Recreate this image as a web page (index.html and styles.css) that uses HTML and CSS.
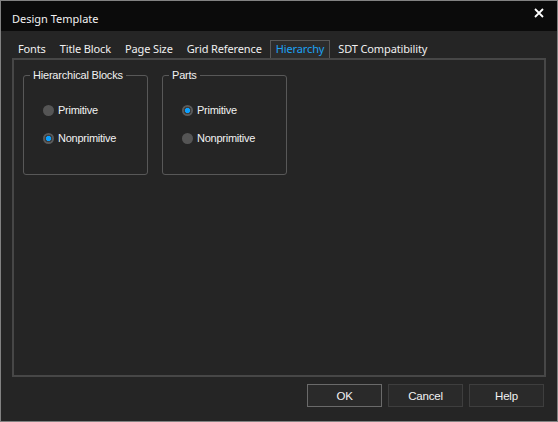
FILE: index.html
```html
<!DOCTYPE html>
<html>
<head>
<meta charset="utf-8">
<link rel="stylesheet" href="styles.css">
</head>
<body>
<div class="window">
  <div class="titlebar">
    <span class="title">Design Template</span>
    <svg class="close" width="10" height="10" viewBox="0 0 10 10"><path d="M1 1 L9 9 M9 1 L1 9" stroke="#ffffff" stroke-width="1.8" fill="none"/></svg>
  </div>
  <div class="content">
    <div class="tabs">
      <div class="tab">Fonts</div>
      <div class="tab">Title Block</div>
      <div class="tab">Page Size</div>
      <div class="tab">Grid Reference</div>
      <div class="tab active">Hierarchy</div>
      <div class="tab">SDT Compatibility</div>
    </div>
    <div class="panel">
      <fieldset class="group">
        <legend>Hierarchical Blocks</legend>
        <div class="opts">
          <div class="opt"><span class="radio"></span><span>Primitive</span></div>
          <div class="opt"><span class="radio checked"></span><span>Nonprimitive</span></div>
        </div>
      </fieldset>
      <fieldset class="group">
        <legend>Parts</legend>
        <div class="opts">
          <div class="opt"><span class="radio checked"></span><span>Primitive</span></div>
          <div class="opt"><span class="radio"></span><span>Nonprimitive</span></div>
        </div>
      </fieldset>
    </div>
    <div class="buttons">
      <div class="btn default">OK</div>
      <div class="btn">Cancel</div>
      <div class="btn">Help</div>
    </div>
  </div>
</div>
</body>
</html>
```
FILE: styles.css
```css
html, body {
  margin: 0;
  padding: 0;
  background: #252525;
}
.window {
  width: 558px;
  height: 422px;
  box-sizing: border-box;
  border: 1px solid #828282;
  background: #252525;
  color: #f2f2f2;
  font-family: "Liberation Sans", Arial, sans-serif;
  font-size: 11px;
}
.titlebar {
  height: 30px;
  background: #0b0b0b;
  display: flex;
  align-items: center;
  justify-content: space-between;
  padding: 0 13px 0 11px;
  box-sizing: border-box;
}
.title {
  font-family: "Noto Sans", "Open Sans", sans-serif;
  font-size: 11px;
  color: #f2f2f2;
  padding-top: 5px;
}
.close {
  margin-top: -7px;
}
.content {
  padding: 0 11px;
}
.tabs {
  display: flex;
  margin-top: 9px;
  height: 18px;
}
.tab {
  font-family: "Noto Sans", "Open Sans", sans-serif;
  font-size: 11px;
  letter-spacing: -0.13px;
  line-height: 16px;
  padding: 0 5px;
  margin-right: 2px;
  border: 1px solid transparent;
  border-bottom: none;
  color: #f0f0f0;
  height: 17px;
}
.tab.active {
  background: #2c2c2c;
  border-color: #585858;
  color: #1ca2f5;
}
.panel {
  height: 319px;
  box-sizing: border-box;
  border: 2px solid #474747;
  padding: 8px 0 0 9px;
  display: flex;
  gap: 14px;
  align-items: flex-start;
}
.group {
  width: 125px;
  box-sizing: border-box;
  margin: 0;
  padding: 0;
  border: 1px solid #585858;
  border-radius: 3px;
  min-width: 0;
}
.group legend {
  margin-left: 6px;
  padding: 0 3px;
  line-height: 14px;
  letter-spacing: -0.2px;
}
.opts {
  padding: 20px 0 28px 19px;
  display: flex;
  flex-direction: column;
  gap: 12px;
}
.opt {
  display: flex;
  align-items: center;
  height: 16px;
  letter-spacing: -0.25px;
}
.radio {
  width: 11px;
  height: 11px;
  border-radius: 50%;
  background: #555555;
  margin-right: 4px;
  flex: none;
}
.radio.checked {
  background: radial-gradient(circle at center, #0aa0ff 0 2.4px, #3c3c3c 2.9px 3.6px, #5a5a5a 4.1px);
}
.buttons {
  display: flex;
  justify-content: flex-end;
  gap: 6px;
  margin-top: 7px;
  margin-right: 2px;
}
.btn {
  width: 75px;
  height: 23px;
  box-sizing: border-box;
  border: 1px solid #3e3e3e;
  background: #2a2a2a;
  display: flex;
  align-items: center;
  justify-content: center;
  font-size: 11.5px;
  letter-spacing: -0.2px;
}
.btn.default {
  border-color: #6a6a6a;
}
```
